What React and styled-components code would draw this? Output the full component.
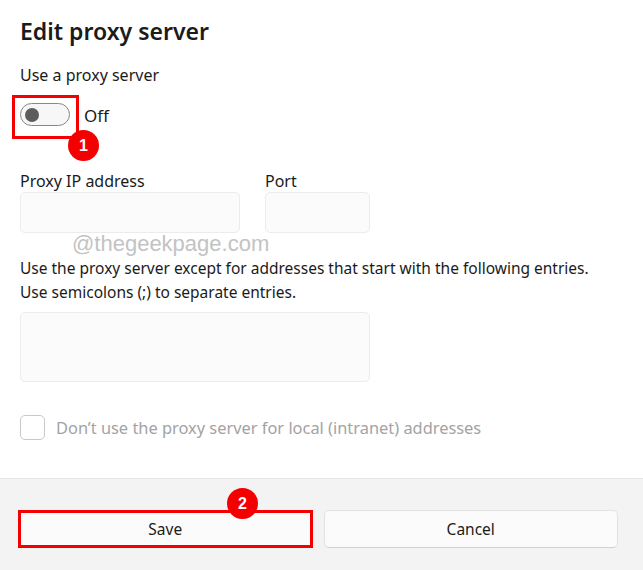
import React from 'react'
import styled, { createGlobalStyle } from 'styled-components'

const Global = createGlobalStyle`
  html, body { margin: 0; padding: 0; background: #fff; }
  body { font-family: "Noto Sans", "Open Sans", sans-serif; color: #1b1b1b; }
`

const Dialog = styled.div`
  position: relative;
  width: 643px;
  height: 570px;
  display: flex;
  flex-direction: column;
  background: #fff;
  overflow: hidden;
`

const Content = styled.div`
  flex: 1;
  padding: 14px 20px 0 20px;
`

const Title = styled.h1`
  margin: 0;
  font-size: 23px;
  line-height: 34px;
  font-weight: 600;
  color: #1b1b1b;
`

const Label = styled.div`
  font-size: 16px;
  line-height: 22px;
  margin-top: ${p => p.$top || 0}px;
`

const ToggleRow = styled.div`
  display: flex;
  align-items: center;
  gap: 14px;
  margin-top: 17px;
  height: 24px;
`

const ToggleWrap = styled.div`
  position: relative;
  width: 50px;
  height: 24px;
  &::after {
    content: '';
    position: absolute;
    left: -8px;
    top: -8px;
    width: 61px;
    height: 38px;
    border: 3px solid #f50000;
  }
`

const Track = styled.div`
  box-sizing: border-box;
  width: 50px;
  height: 23px;
  border: 1px solid #878787;
  border-radius: 12px;
  background: #f7f7f7;
  display: flex;
  align-items: center;
  padding-left: 4px;
`

const Knob = styled.div`
  width: 14px;
  height: 14px;
  border-radius: 50%;
  background: #5c5c5c;
`

const Badge = styled.div`
  position: absolute;
  left: ${p => p.$x}px;
  top: ${p => p.$y}px;
  width: 31px;
  height: 31px;
  border-radius: 50%;
  background: #f50000;
  color: #fff;
  font-family: "Liberation Sans", Arial, sans-serif;
  font-weight: 700;
  font-size: 16px;
  display: flex;
  align-items: center;
  justify-content: center;
  z-index: 2;
`

const StateText = styled.span`
  font-size: 17px;
`

const Fields = styled.div`
  display: grid;
  grid-template-columns: 220px 105px;
  column-gap: 25px;
  margin-top: 43px;
`

const Field = styled.div`
  display: flex;
  flex-direction: column;
`

const Input = styled.div`
  box-sizing: border-box;
  height: 41px;
  border: 1px solid #ececec;
  border-radius: 5px;
  background: #fbfbfb;
  width: ${p => p.$w || 220}px;
`

const Watermark = styled.div`
  position: absolute;
  left: 72px;
  top: 231px;
  font-family: "Liberation Sans", Arial, sans-serif;
  font-size: 22px;
  color: #c3c3c3;
`

const Para = styled.p`
  margin: 24px 0 0;
  font-size: 15.5px;
  line-height: 23.5px;
`

const TextArea = styled(Input)`
  height: 70px;
  width: 350px;
  margin-top: 8px;
`

const CheckRow = styled.div`
  display: flex;
  align-items: center;
  gap: 11px;
  margin-top: 33px;
  color: #a3a3a3;
  font-size: 16.4px;
`

const Box = styled.div`
  box-sizing: border-box;
  width: 25px;
  height: 25px;
  border: 1px solid #c9c9c9;
  border-radius: 5px;
`

const Footer = styled.div`
  height: 92px;
  background: #f3f3f3;
  border-top: 1px solid #e5e5e5;
  display: grid;
  grid-template-columns: 1fr 1fr;
  column-gap: 11px;
  padding: 31px 25px 0 18px;
  box-sizing: border-box;
  align-items: start;
`

const Button = styled.button`
  position: relative;
  box-sizing: border-box;
  height: 38px;
  background: #fbfbfb;
  border: ${p => (p.$marked ? '3px solid #f50000' : '1px solid #e2e2e2')};
  border-bottom-color: ${p => (p.$marked ? '#f50000' : '#d0d0d0')};
  border-radius: ${p => (p.$marked ? '0' : '5px')};
  font-family: "Noto Sans", "Open Sans", sans-serif;
  font-size: 15.5px;
  color: #1b1b1b;
  padding: 0;
`

export default function App() {
  return (
    <Dialog>
      <Global />
      <Content>
        <Title>Edit proxy server</Title>
        <Label $top={16}>Use a proxy server</Label>
        <ToggleRow>
          <ToggleWrap>
            <Track><Knob /></Track>
            <Badge $x={48} $y={27}>1</Badge>
          </ToggleWrap>
          <StateText>Off</StateText>
        </ToggleRow>
        <Fields>
          <Field>
            <Label>Proxy IP address</Label>
            <Input $w={220} />
          </Field>
          <Field>
            <Label>Port</Label>
            <Input $w={105} />
          </Field>
        </Fields>
        <Para>
          Use the proxy server except for addresses that start with the following entries.
          <br />
          Use semicolons (;) to separate entries.
        </Para>
        <TextArea />
        <CheckRow>
          <Box />
          <span>Don’t use the proxy server for local (intranet) addresses</span>
        </CheckRow>
      </Content>
      <Watermark>@thegeekpage.com</Watermark>
      <Footer>
        <Button $marked>
          Save
          <Badge $x={206} $y={-25}>2</Badge>
        </Button>
        <Button>Cancel</Button>
      </Footer>
    </Dialog>
  )
}
